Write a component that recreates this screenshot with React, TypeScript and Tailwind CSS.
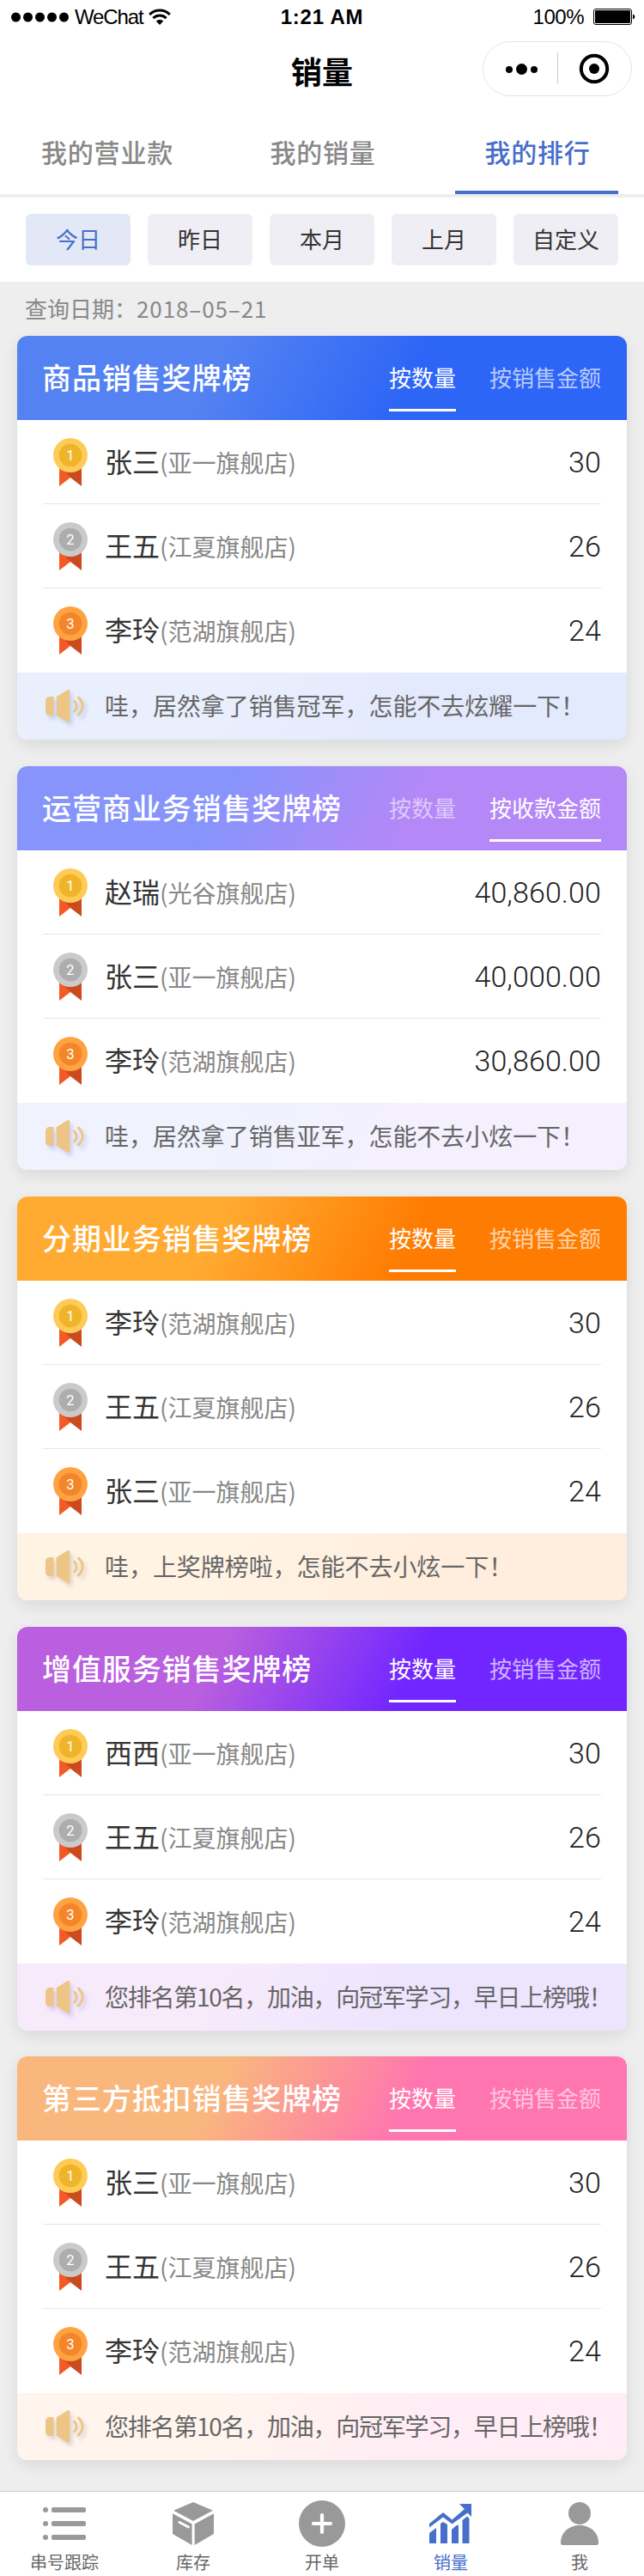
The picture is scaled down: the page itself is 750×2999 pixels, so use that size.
import React from "react";

type Row = { name: string; store: string; value: string };
type Board = {
  title: string;
  tabs: [string, string];
  active: number;
  rows: Row[];
  notice: string;
  tight?: boolean;
  head: string;
  foot: string;
  dim: string;
  shadow: string;
};

const shops = {
  a: "(亚一旗舰店)",
  b: "(江夏旗舰店)",
  c: "(范湖旗舰店)",
  d: "(光谷旗舰店)",
};

const boards: Board[] = [
  {
    title: "商品销售奖牌榜",
    tabs: ["按数量", "按销售金额"],
    active: 0,
    rows: [
      { name: "张三", store: shops.a, value: "30" },
      { name: "王五", store: shops.b, value: "26" },
      { name: "李玲", store: shops.c, value: "24" },
    ],
    notice: "哇，居然拿了销售冠军，怎能不去炫耀一下！",
    head: "bg-[linear-gradient(117deg,#5482f2_33%,#2d65f6_64%)]",
    foot: "bg-[linear-gradient(117deg,#e9effd_33%,#e4eafd_64%)]",
    dim: "text-[#b9cbfc]",
    shadow: "#a9bdf0",
  },
  {
    title: "运营商业务销售奖牌榜",
    tabs: ["按数量", "按收款金额"],
    active: 1,
    rows: [
      { name: "赵瑞", store: shops.d, value: "40,860.00" },
      { name: "张三", store: shops.a, value: "40,000.00" },
      { name: "李玲", store: shops.c, value: "30,860.00" },
    ],
    notice: "哇，居然拿了销售亚军，怎能不去小炫一下！",
    head: "bg-[linear-gradient(117deg,#8694fb_33%,#b488f7_64%)]",
    foot: "bg-[linear-gradient(117deg,#f0f2fe_33%,#f5f0fe_64%)]",
    dim: "text-[#dccbfb]",
    shadow: "#b4bdf2",
  },
  {
    title: "分期业务销售奖牌榜",
    tabs: ["按数量", "按销售金额"],
    active: 0,
    rows: [
      { name: "李玲", store: shops.c, value: "30" },
      { name: "王五", store: shops.b, value: "26" },
      { name: "张三", store: shops.a, value: "24" },
    ],
    notice: "哇，上奖牌榜啦，怎能不去小炫一下！",
    head: "bg-[linear-gradient(117deg,#ffaa31_33%,#ff7c02_64%)]",
    foot: "bg-[linear-gradient(117deg,#fff3e4_33%,#ffeede_64%)]",
    dim: "text-[#ffd2a8]",
    shadow: "#c9c3bd",
  },
  {
    title: "增值服务销售奖牌榜",
    tabs: ["按数量", "按销售金额"],
    active: 0,
    rows: [
      { name: "西西", store: shops.a, value: "30" },
      { name: "王五", store: shops.b, value: "26" },
      { name: "李玲", store: shops.c, value: "24" },
    ],
    notice: "您排名第10名，加油，向冠军学习，早日上榜哦！",
    tight: true,
    head: "bg-[linear-gradient(117deg,#b95fdf_33%,#7226ff_64%)]",
    foot: "bg-[linear-gradient(117deg,#f7eafb_33%,#ede5fe_64%)]",
    dim: "text-[#cdb4ff]",
    shadow: "#bfb6ea",
  },
  {
    title: "第三方抵扣销售奖牌榜",
    tabs: ["按数量", "按销售金额"],
    active: 0,
    rows: [
      { name: "张三", store: shops.a, value: "30" },
      { name: "王五", store: shops.b, value: "26" },
      { name: "李玲", store: shops.c, value: "24" },
    ],
    notice: "您排名第10名，加油，向冠军学习，早日上榜哦！",
    tight: true,
    head: "bg-[linear-gradient(117deg,#f9b77d_33%,#ff75af_64%)]",
    foot: "bg-[linear-gradient(117deg,#fff5ed_33%,#ffecf5_64%)]",
    dim: "text-[#ffc6df]",
    shadow: "#c9c3cf",
  },
];

const medals = [
  { outer: "#fecb57", inner: "#f0b42b" },
  { outer: "#cacaca", inner: "#adadad" },
  { outer: "#ffa342", inner: "#f4862a" },
];

function Medal({ rank }: { rank: number }) {
  const m = medals[rank - 1];
  return (
    <svg width="40" height="57" viewBox="0 0 40 57" className="block shrink-0">
      <path d="M7 30H12L20 46L7 56Z" fill="#f45a25" />
      <path d="M33 30H10V35.500L20 46L33 56Z" fill="#cb4b1e" />
      <circle cx="20" cy="20" r="20" fill={m.outer} />
      <circle cx="20" cy="20" r="13.3" fill={m.inner} />
      <text x="20" y="26" textAnchor="middle" fontSize="16.5" fill="#fff" className="font-[Roboto,sans-serif]">
        {rank}
      </text>
    </svg>
  );
}

function Horn({ shadow }: { shadow: string }) {
  const shapes = (
    <>
      <path d="M5 8H9.5V30H5C2 30 0 28 0 25V13C0 10 2 8 5 8Z" />
      <path d="M12.7 8.3L25.5.3C27 -.5 28.4 .3 28.4 2V36C28.4 37.7 27 38.5 25.5 37.7L12.7 29.7Z" />
      <path d="M33.5 13.2C37 16.5 37 21.5 33.5 24.8" fill="none" strokeWidth="3" strokeLinecap="round" />
      <path d="M38.3 9C44.7 14.5 44.7 23.5 38.3 29" fill="none" strokeWidth="3" strokeLinecap="round" />
    </>
  );
  return (
    <svg width="50" height="48" viewBox="0 0 50 48" className="block shrink-0 overflow-visible">
      <g fill={shadow} stroke={shadow} strokeWidth="0" transform="translate(3 4)" className="opacity-60 blur-[2px]">
        {shapes}
      </g>
      <g fill="#edc685" stroke="#edc685" strokeWidth="0">
        {shapes}
      </g>
    </svg>
  );
}

function BoardCard({ board }: { board: Board }) {
  return (
    <section className="h-[470px] overflow-hidden rounded-xl bg-white shadow-[0_6px_18px_rgba(0,0,0,0.09)]">
      <header className={`flex h-[98px] justify-between pr-[30px] pl-[29px] text-white ${board.head}`}>
        <h2 className="text-[34px] leading-[96px] font-medium tracking-[0.9px]">{board.title}</h2>
        <div className="flex gap-[39px] text-[26px]">
          {board.tabs.map((t, i) => (
            <div
              key={t}
              className={`h-[88px] border-b-3 leading-[95px] ${
                i === board.active ? "border-white text-white" : `border-transparent ${board.dim}`
              }`}
            >
              {t}
            </div>
          ))}
        </div>
      </header>
      <ul className="px-[30px]">
        {board.rows.map((r, i) => (
          <li key={i} className="flex h-[98px] items-center border-b border-[#e6e6e6] last:border-transparent">
            <div className="pt-[2px] pl-3">
              <Medal rank={i + 1} />
            </div>
            <div className="ml-5 flex items-baseline pb-[3px] leading-none text-[#333]">
              <span className="text-[32px]">{r.name}</span>
              <span className="text-[28px] text-[#888]">{r.store}</span>
            </div>
            <span className="ml-auto font-[Roboto,sans-serif] text-[34px] leading-none font-light tracking-[0.1px] text-[#222]">
              {r.value}
            </span>
          </li>
        ))}
      </ul>
      <footer className={`flex h-[78px] pl-[33px] ${board.foot}`}>
        <div className="pt-5">
          <Horn shadow={board.shadow} />
        </div>
        <p
          className={`ml-[19px] text-[28px] leading-[76px] whitespace-nowrap text-[#666] ${
            board.tight ? "tracking-[-1.25px]" : "tracking-[-0.05px]"
          }`}
        >
          {board.notice}
        </p>
      </footer>
    </section>
  );
}

function StatusBar() {
  return (
    <div className="grid h-10 grid-cols-3 items-center px-3 text-black">
      <div className="flex items-center">
        <svg width="70" height="16" viewBox="0 0 70 16">
          {[0, 1, 2, 3, 4].map((i) => (
            <circle key={i} cx={6.5 + i * 14} cy="8" r="5.5" />
          ))}
        </svg>
        <span className="ml-[5px] font-['Liberation_Sans',sans-serif] text-2xl tracking-[-1.1px]">WeChat</span>
        <svg width="26" height="20" viewBox="0 0 26 20" className="ml-1.5" fill="none" stroke="#000" strokeWidth="3">
          <path d="M1.2 6.8C8 .3 18 .3 24.8 6.8" />
          <path d="M5.4 11.1C9.8 7 16.2 7 20.6 11.1" />
          <path d="M13 19L8.8 14.6C11 12.6 15 12.6 17.2 14.6Z" fill="#000" stroke="none" />
        </svg>
      </div>
      <div className="text-center font-['Liberation_Sans',sans-serif] text-2xl font-bold tracking-[0.8px]">1:21 AM</div>
      <div className="flex items-center justify-end">
        <span className="font-['Liberation_Sans',sans-serif] text-2xl tracking-[-0.5px]">100%</span>
        <svg width="49" height="20" viewBox="0 0 49 20" className="-mr-0.5 ml-[11px]">
          <rect x="0.5" y="0.5" width="44" height="18" rx="2.5" fill="none" stroke="#000" />
          <rect x="2" y="2" width="41" height="15" rx="1" />
          <path d="M46 6.5C49 7.5 49 11.5 46 12.5Z" />
        </svg>
      </div>
    </div>
  );
}

const navItems = [
  {
    label: "串号跟踪",
    icon: (
      <svg width="50" height="54" viewBox="0 0 50 54" fill="#999">
        {[0, 16, 32].map((y) => (
          <g key={y}>
            <circle cx="3" cy={11 + y} r="3" />
            <rect x="10" y={8 + y} width="40" height="6" rx="2" />
          </g>
        ))}
      </svg>
    ),
  },
  {
    label: "库存",
    icon: (
      <svg width="48" height="54" viewBox="0 0 48 54" fill="#999">
        <path d="M24 2L47 11.7L24 24L1 11.7Z" />
        <path d="M0 15.3L22.6 27.6V52L0 39Z" />
        <path d="M48 15.3L25.6 27.6V52L48 39Z" />
        <path d="M8 25.5L18.5 31" stroke="#fff" strokeWidth="3" strokeLinecap="round" />
      </svg>
    ),
  },
  {
    label: "开单",
    icon: (
      <svg width="54" height="54" viewBox="0 0 54 54">
        <circle cx="27" cy="27" r="27" fill="#999" />
        <path d="M27 17V37M17 27H37" stroke="#fff" strokeWidth="4.2" strokeLinecap="round" />
      </svg>
    ),
  },
  {
    label: "销量",
    icon: (
      <svg width="50" height="54" viewBox="0 0 50 54" fill="#466ecb">
        <path d="M0 27L16 14L26.500 22.5L41 10L35 4H49V19L44.5 14.5L26.500 27.500L16 19.500L0 31.500Z" />
        <path d="M0 38L8 32V50H0Z" />
        <path d="M13 27L16 25L21 28V50H13Z" />
        <path d="M26 34L31 29.500L34 28.5V50H26Z" />
        <path d="M38.5 23L44 18.5L46.5 21V50H38.5Z" />
      </svg>
    ),
    active: true,
  },
  {
    label: "我",
    icon: (
      <svg width="44" height="54" viewBox="0 0 44 54" fill="#999">
        <circle cx="22" cy="15" r="13" />
        <path d="M0 49C0 37 10 29 22 29S44 37 44 49C44 51 43.5 52 42 52H2C.5 52 0 51 0 49Z" />
      </svg>
    ),
  },
];

export default function App() {
  return (
    <div className="flex h-[2999px] w-[750px] flex-col bg-[#eee] font-['Noto_Sans_CJK_SC',sans-serif]">
      <div className="bg-white">
        <StatusBar />
        <div className="grid h-[88px] grid-cols-[1fr_auto_1fr] items-center">
          <span />
          <h1 className="pb-1 text-4xl leading-none font-bold text-black">销量</h1>
          <div className="mt-[-8px] mr-[14px] flex h-16 w-[174px] items-center justify-self-end rounded-full border border-[#e5e5e5]">
            <svg width="172" height="62" viewBox="0 0 172 62">
              <circle cx="30" cy="32" r="4" />
              <circle cx="44.5" cy="31.500" r="6.5" />
              <circle cx="59" cy="32" r="4" />
              <path d="M86.500 12V49" stroke="#ccc" />
              <circle cx="129" cy="31" r="15.200" fill="none" stroke="#000" strokeWidth="4" />
              <circle cx="129" cy="31" r="6" />
            </svg>
          </div>
        </div>
        <nav className="grid h-[102px] grid-cols-3 border-b-4 border-[#eee] text-[30px] font-medium tracking-[0.8px] text-[#888]">
          <div className="text-center leading-[97px]">我的营业款</div>
          <div className="pl-0.5 text-center leading-[97px]">我的销量</div>
          <div className="mr-[30px] ml-[30px] h-[98px] border-b-4 border-[#466ecb] pl-0.5 text-center leading-[97px] text-[#466ecb]">
            我的排行
          </div>
        </nav>
        <div className="grid h-[98px] grid-cols-5 gap-5 px-[30px] pt-[19px] text-[26px] text-[#333]">
          {["今日", "昨日", "本月", "上月", "自定义"].map((t, i) => (
            <div
              key={t}
              className={`h-[60px] rounded-md text-center leading-[58px] ${
                i === 0 ? "bg-[#e2e8f6] text-[#466ecb]" : "bg-[#efeef4]"
              }`}
            >
              {t}
            </div>
          ))}
        </div>
      </div>
      <p className="h-[63px] pl-[29px] text-[26px] leading-[62px] text-[#888]">
        查询日期：<span className="tracking-[0.9px]">2018–05–21</span>
      </p>
      <main className="flex grow flex-col gap-[31px] px-5 [&>:last-child]:-mt-px">
        {boards.map((b) => (
          <BoardCard key={b.title} board={b} />
        ))}
      </main>
      <nav className="grid h-[99px] grid-cols-5 border-t border-[#ccc] bg-white text-xl text-[#666]">
        {navItems.map((n) => (
          <div key={n.label} className={`flex flex-col items-center pt-[10px] ${n.active ? "text-[#466ecb]" : ""}`}>
            {n.icon}
            <span className="mt-1 leading-7">{n.label}</span>
          </div>
        ))}
      </nav>
    </div>
  );
}
